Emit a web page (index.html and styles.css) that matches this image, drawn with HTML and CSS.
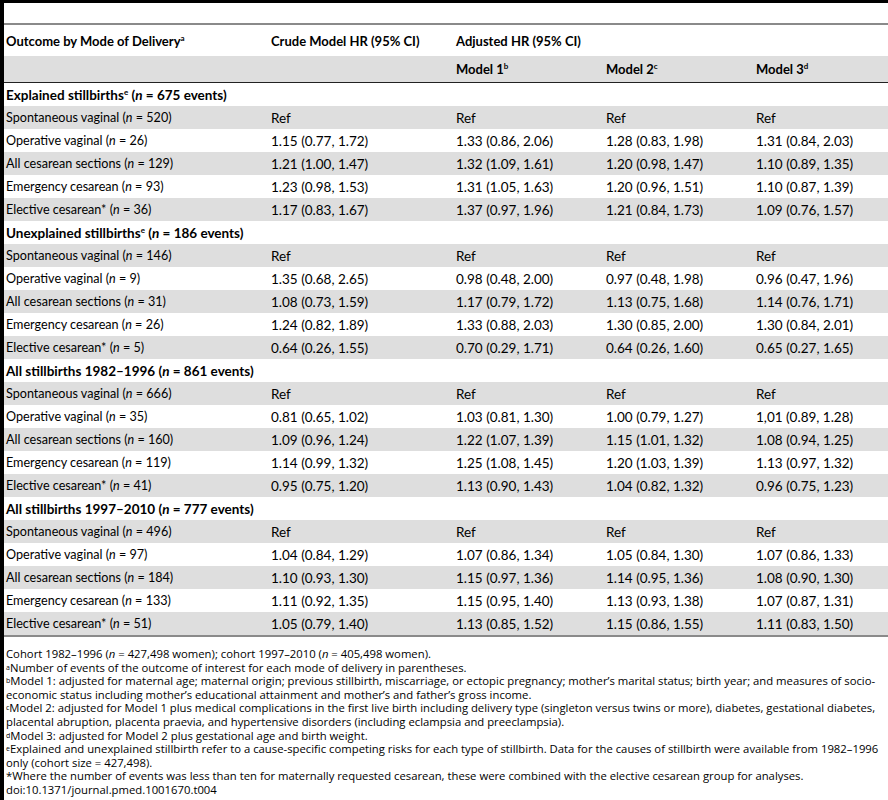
FILE: index.html
```html
<!DOCTYPE html>
<html lang="en">
<head>
  <meta charset="UTF-8" />
  <title>Table 4</title>
  <link rel="stylesheet" href="styles.css">
</head>
<body>
  <div class="page">
    <div class="spacer"></div>
    <table class="hr-table">
      <thead>
        <tr class="head-top">
          <th class="c1">Outcome by Mode of Delivery<sup>a</sup></th>
          <th class="c2">Crude Model HR (95% CI)</th>
          <th colspan="3">Adjusted HR (95% CI)</th>
        </tr>
        <tr class="head-sub">
          <th></th>
          <th></th>
          <th class="c3">Model 1<sup>b</sup></th>
          <th class="c4">Model 2<sup>c</sup></th>
          <th>Model 3<sup>d</sup></th>
        </tr>
      </thead>
      <tbody>
        <tr class="group">
          <td colspan="5">Explained stillbirths<sup>e</sup> (<i>n</i> = 675 events)</td>
        </tr>
        <tr class="shade"><td>Spontaneous vaginal (<i>n</i> = 520)</td><td>Ref</td><td>Ref</td><td>Ref</td><td>Ref</td></tr>
        <tr><td>Operative vaginal (<i>n</i> = 26)</td><td>1.15 (0.77, 1.72)</td><td>1.33 (0.86, 2.06)</td><td>1.28 (0.83, 1.98)</td><td>1.31 (0.84, 2.03)</td></tr>
        <tr class="shade"><td>All cesarean sections (<i>n</i> = 129)</td><td>1.21 (1.00, 1.47)</td><td>1.32 (1.09, 1.61)</td><td>1.20 (0.98, 1.47)</td><td>1.10 (0.89, 1.35)</td></tr>
        <tr><td>Emergency cesarean (<i>n</i> = 93)</td><td>1.23 (0.98, 1.53)</td><td>1.31 (1.05, 1.63)</td><td>1.20 (0.96, 1.51)</td><td>1.10 (0.87, 1.39)</td></tr>
        <tr class="shade"><td>Elective cesarean* (<i>n</i> = 36)</td><td>1.17 (0.83, 1.67)</td><td>1.37 (0.97, 1.96)</td><td>1.21 (0.84, 1.73)</td><td>1.09 (0.76, 1.57)</td></tr>

        <tr class="group">
          <td colspan="5">Unexplained stillbirths<sup>e</sup> (<i>n</i> = 186 events)</td>
        </tr>
        <tr class="shade"><td>Spontaneous vaginal (<i>n</i> = 146)</td><td>Ref</td><td>Ref</td><td>Ref</td><td>Ref</td></tr>
        <tr><td>Operative vaginal (<i>n</i> = 9)</td><td>1.35 (0.68, 2.65)</td><td>0.98 (0.48, 2.00)</td><td>0.97 (0.48, 1.98)</td><td>0.96 (0.47, 1.96)</td></tr>
        <tr class="shade"><td>All cesarean sections (<i>n</i> = 31)</td><td>1.08 (0.73, 1.59)</td><td>1.17 (0.79, 1.72)</td><td>1.13 (0.75, 1.68)</td><td>1.14 (0.76, 1.71)</td></tr>
        <tr><td>Emergency cesarean (<i>n</i> = 26)</td><td>1.24 (0.82, 1.89)</td><td>1.33 (0.88, 2.03)</td><td>1.30 (0.85, 2.00)</td><td>1.30 (0.84, 2.01)</td></tr>
        <tr class="shade"><td>Elective cesarean* (<i>n</i> = 5)</td><td>0.64 (0.26, 1.55)</td><td>0.70 (0.29, 1.71)</td><td>0.64 (0.26, 1.60)</td><td>0.65 (0.27, 1.65)</td></tr>

        <tr class="group">
          <td colspan="5">All stillbirths 1982–1996 (<i>n</i> = 861 events)</td>
        </tr>
        <tr class="shade"><td>Spontaneous vaginal (<i>n</i> = 666)</td><td>Ref</td><td>Ref</td><td>Ref</td><td>Ref</td></tr>
        <tr><td>Operative vaginal (<i>n</i> = 35)</td><td>0.81 (0.65, 1.02)</td><td>1.03 (0.81, 1.30)</td><td>1.00 (0.79, 1.27)</td><td>1,01 (0.89, 1.28)</td></tr>
        <tr class="shade"><td>All cesarean sections (<i>n</i> = 160)</td><td>1.09 (0.96, 1.24)</td><td>1.22 (1.07, 1.39)</td><td>1.15 (1.01, 1.32)</td><td>1.08 (0.94, 1.25)</td></tr>
        <tr><td>Emergency cesarean (<i>n</i> = 119)</td><td>1.14 (0.99, 1.32)</td><td>1.25 (1.08, 1.45)</td><td>1.20 (1.03, 1.39)</td><td>1.13 (0.97, 1.32)</td></tr>
        <tr class="shade"><td>Elective cesarean* (<i>n</i> = 41)</td><td>0.95 (0.75, 1.20)</td><td>1.13 (0.90, 1.43)</td><td>1.04 (0.82, 1.32)</td><td>0.96 (0.75, 1.23)</td></tr>

        <tr class="group">
          <td colspan="5">All stillbirths 1997–2010 (<i>n</i> = 777 events)</td>
        </tr>
        <tr class="shade"><td>Spontaneous vaginal (<i>n</i> = 496)</td><td>Ref</td><td>Ref</td><td>Ref</td><td>Ref</td></tr>
        <tr><td>Operative vaginal (<i>n</i> = 97)</td><td>1.04 (0.84, 1.29)</td><td>1.07 (0.86, 1.34)</td><td>1.05 (0.84, 1.30)</td><td>1.07 (0.86, 1.33)</td></tr>
        <tr class="shade"><td>All cesarean sections (<i>n</i> = 184)</td><td>1.10 (0.93, 1.30)</td><td>1.15 (0.97, 1.36)</td><td>1.14 (0.95, 1.36)</td><td>1.08 (0.90, 1.30)</td></tr>
        <tr><td>Emergency cesarean (<i>n</i> = 133)</td><td>1.11 (0.92, 1.35)</td><td>1.15 (0.95, 1.40)</td><td>1.13 (0.93, 1.38)</td><td>1.07 (0.87, 1.31)</td></tr>
        <tr class="shade"><td>Elective cesarean* (<i>n</i> = 51)</td><td>1.05 (0.79, 1.40)</td><td>1.13 (0.85, 1.52)</td><td>1.15 (0.86, 1.55)</td><td>1.11 (0.83, 1.50)</td></tr>
      </tbody>
    </table>

    <div class="notes">
      <p>Cohort 1982–1996 (<i>n</i> = 427,498 women); cohort 1997–2010 (<i>n</i> = 405,498 women).</p>
      <p><sup>a</sup>Number of events of the outcome of interest for each mode of delivery in parentheses.</p>
      <p><sup>b</sup>Model 1: adjusted for maternal age; maternal origin; previous stillbirth, miscarriage, or ectopic pregnancy; mother’s marital status; birth year; and measures of socio-economic status including mother’s educational attainment and mother’s and father’s gross income.</p>
      <p><sup>c</sup>Model 2: adjusted for Model 1 plus medical complications in the first live birth including delivery type (singleton versus twins or more), diabetes, gestational diabetes, placental abruption, placenta praevia, and hypertensive disorders (including eclampsia and preeclampsia).</p>
      <p><sup>d</sup>Model 3: adjusted for Model 2 plus gestational age and birth weight.</p>
      <p><sup>e</sup>Explained and unexplained stillbirth refer to a cause-specific competing risks for each type of stillbirth. Data for the causes of stillbirth were available from 1982–1996 only (cohort size = 427,498).</p>
      <p>*Where the number of events was less than ten for maternally requested cesarean, these were combined with the elective cesarean group for analyses.</p>
      <p>doi:10.1371/journal.pmed.1001670.t004</p>
    </div>
  </div>
</body>
</html>
```

FILE: styles.css
```css
body {
  margin: 0;
  background: #fff;
  font-family: 'Open Sans', sans-serif;
  color: #000;
}

.page {
  border-top: 3px solid #000;
  border-left: 4px solid #000;
  min-height: 797px;
}

.spacer {
  height: 20px;
}

.hr-table {
  width: 100%;
  border-collapse: collapse;
  font-family: Lato, 'Open Sans', sans-serif;
  font-size: 13.5px;
  border-top: 2px solid #8a8a8a;
  border-bottom: 2px solid #8a8a8a;
}

.hr-table th,
.hr-table td {
  text-align: left;
  padding: 0 0 0 2px;
  height: 23px;
  white-space: nowrap;
}

.hr-table th {
  font-weight: bold;
  font-size: 13px;
}

/* row labels are narrower than the numbers in the original */
.hr-table td:first-child {
  font-size: 12.6px;
}

.head-top th {
  height: 31px;
}

.head-sub th {
  background: #dedede;
  height: 26px;
  border-bottom: 1px solid #222;
}

.hr-table .c1 { width: 263px; }
.hr-table .c2 { width: 183px; }
.hr-table .c3 { width: 148px; }
.hr-table .c4 { width: 148px; }

.hr-table .group td {
  font-weight: bold;
  font-size: 13.5px;
}

.shade td {
  background: #dedede;
}

sup {
  font-size: 8px;
  line-height: 0;
  vertical-align: 5px;
}

.notes {
  padding: 10px 0 0 2px;
  font-size: 11.3px;
  line-height: 13.6px;
}

.notes p {
  margin: 0;
}

.notes sup {
  font-size: 7px;
  vertical-align: 2px;
}
```
